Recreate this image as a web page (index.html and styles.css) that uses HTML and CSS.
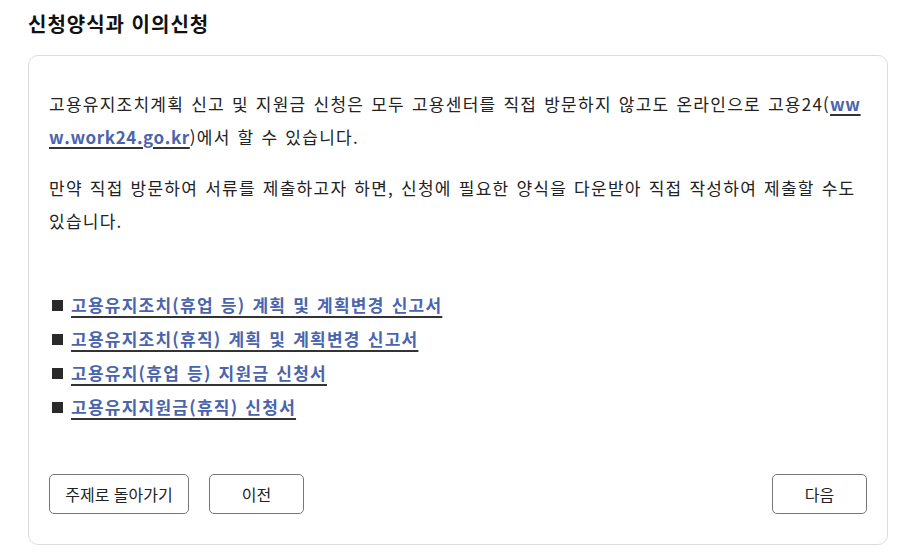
FILE: index.html
```html
<!DOCTYPE html>
<html lang="ko">
<head>
<meta charset="utf-8">
<link rel="stylesheet" href="styles.css">
</head>
<body>
<div class="page">
  <h2 class="title">신청양식과 이의신청</h2>
  <div class="card">
    <p class="para">고용유지조치계획 신고 및 지원금 신청은 모두 고용센터를 직접 방문하지 않고도 온라인으로 고용24(<a class="inline-link" href="#">www.work24.go.kr</a>)에서 할 수 있습니다.</p>
    <p class="para">만약 직접 방문하여 서류를 제출하고자 하면, 신청에 필요한 양식을 다운받아 직접 작성하여 제출할 수도 있습니다.</p>
    <ul class="forms">
      <li><a href="#">고용유지조치(휴업 등) 계획 및 계획변경 신고서</a></li>
      <li><a href="#">고용유지조치(휴직) 계획 및 계획변경 신고서</a></li>
      <li><a href="#">고용유지(휴업 등) 지원금 신청서</a></li>
      <li><a href="#">고용유지지원금(휴직) 신청서</a></li>
    </ul>
    <div class="actions">
      <button class="btn btn-wide">주제로 돌아가기</button>
      <button class="btn">이전</button>
      <button class="btn btn-next">다음</button>
    </div>
  </div>
</div>
</body>
</html>
```

FILE: styles.css
```css
* { box-sizing: border-box; }
html, body {
  margin: 0;
  padding: 0;
  background: #fff;
}
body {
  font-family: "Noto Sans CJK KR", "Noto Sans", Roboto, sans-serif;
  color: #222;
}
.page {
  padding: 9px 27px 0 28px;
}
.title {
  margin: 0 0 16px;
  font-size: 20px;
  font-weight: 700;
  line-height: 30px;
  letter-spacing: 1px;
  color: #111;
}
.card {
  border: 1px solid #dcdcdc;
  border-radius: 10px;
  padding: 31px 20px 30px 20px;
  height: 490px;
  display: flex;
  flex-direction: column;
}
.para {
  margin: 0 0 18px;
  font-size: 17px;
  line-height: 33px;
  letter-spacing: 1.25px;
  word-spacing: 1px;
  color: #222;
  word-break: break-all;
}
.inline-link {
  color: #4a64ad;
  font-weight: 700;
  letter-spacing: 0.6px;
  text-decoration: underline;
  text-decoration-color: #333;
  text-underline-offset: 3px;
  text-decoration-thickness: 2px;
}
.forms {
  list-style: none;
  margin: 33px 0 0;
  padding: 0;
}
.forms li {
  font-size: 17px;
  line-height: 34px;
  letter-spacing: 1.25px;
  word-spacing: 1px;
  display: flex;
  align-items: center;
}
.forms li::before {
  content: "";
  width: 11px;
  height: 11px;
  background: #2a2a2a;
  margin: 0 8px 0 3px;
  flex: none;
}
.forms a {
  color: #4a64ad;
  font-weight: 700;
  text-decoration: underline;
  text-decoration-color: #333;
  text-underline-offset: 4px;
  text-decoration-thickness: 2px;
}
.actions {
  margin-top: auto;
  display: flex;
  gap: 20px;
}
.btn {
  font-family: inherit;
  font-size: 16px;
  color: #222;
  background: #fff;
  border: 1px solid #777;
  border-radius: 5px;
  height: 40px;
  width: 95px;
  padding: 0;
  cursor: pointer;
}
.btn-wide { width: 140px; }
.btn-next { margin-left: auto; }
```
